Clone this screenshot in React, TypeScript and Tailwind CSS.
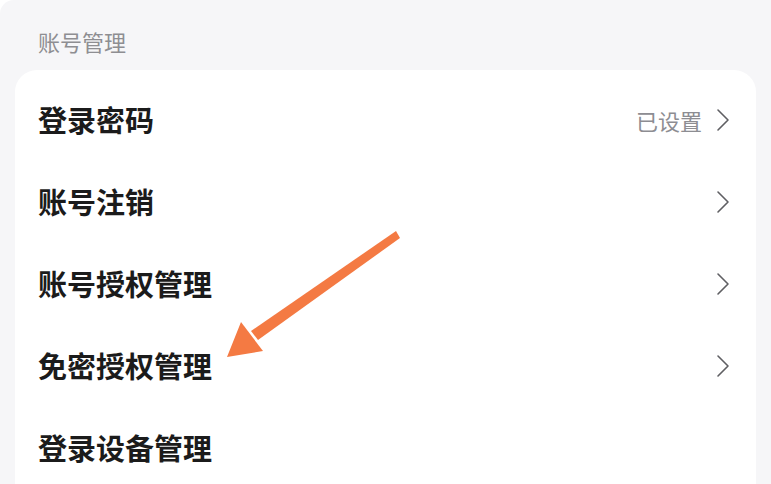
const rows = [
  { label: "登录密码", value: "已设置", arrow: true },
  { label: "账号注销", value: "", arrow: true },
  { label: "账号授权管理", value: "", arrow: true },
  { label: "免密授权管理", value: "", arrow: true },
  { label: "登录设备管理", value: "", arrow: false },
];

const font = { fontFamily: '"Noto Sans CJK SC", "Noto Sans", sans-serif' };

function Chevron() {
  return (
    <svg width="14" height="24" viewBox="0 0 14 24" fill="none">
      <polyline points="2,2 12,12 2,22" stroke="#5f5f63" strokeWidth="1.6" strokeLinecap="round" strokeLinejoin="round" />
    </svg>
  );
}

export default function App() {
  return (
    <div className="relative h-[484px] w-[771px] overflow-hidden bg-white" style={font}>
      <div className="h-full w-full rounded-tl-[14px] bg-[#f6f6f8] px-[15px]">
        {/* 分组标题 */}
        <div className="flex h-[70px] items-center pl-[23px] pt-[12px] text-[22px] text-[#8e8e92]">
          账号管理
        </div>

        {/* 列表卡片 */}
        <div className="w-[741px] rounded-[22px] bg-white pt-[9px] pb-6">
          {rows.map((r) => (
            <div key={r.label} className="flex h-[82px] items-center justify-between pl-[23px] pr-[26px]">
              <span className="text-[29px] font-semibold text-[#1b1b1b]">{r.label}</span>
              <div className="flex items-center gap-[14px]">
                {r.value && <span className="text-[22px] text-[#8d8d92]">{r.value}</span>}
                {r.arrow && <Chevron />}
              </div>
            </div>
          ))}
        </div>
      </div>

      {/* 标注箭头 */}
      <svg className="pointer-events-none absolute left-0 top-0" width="771" height="484" viewBox="0 0 771 484">
        <polygon points="396,231 400,238 258,340 251,331" fill="#f47a43" />
        <polygon points="227,357 241,322 263,351" fill="#f47a43" />
      </svg>
    </div>
  );
}
